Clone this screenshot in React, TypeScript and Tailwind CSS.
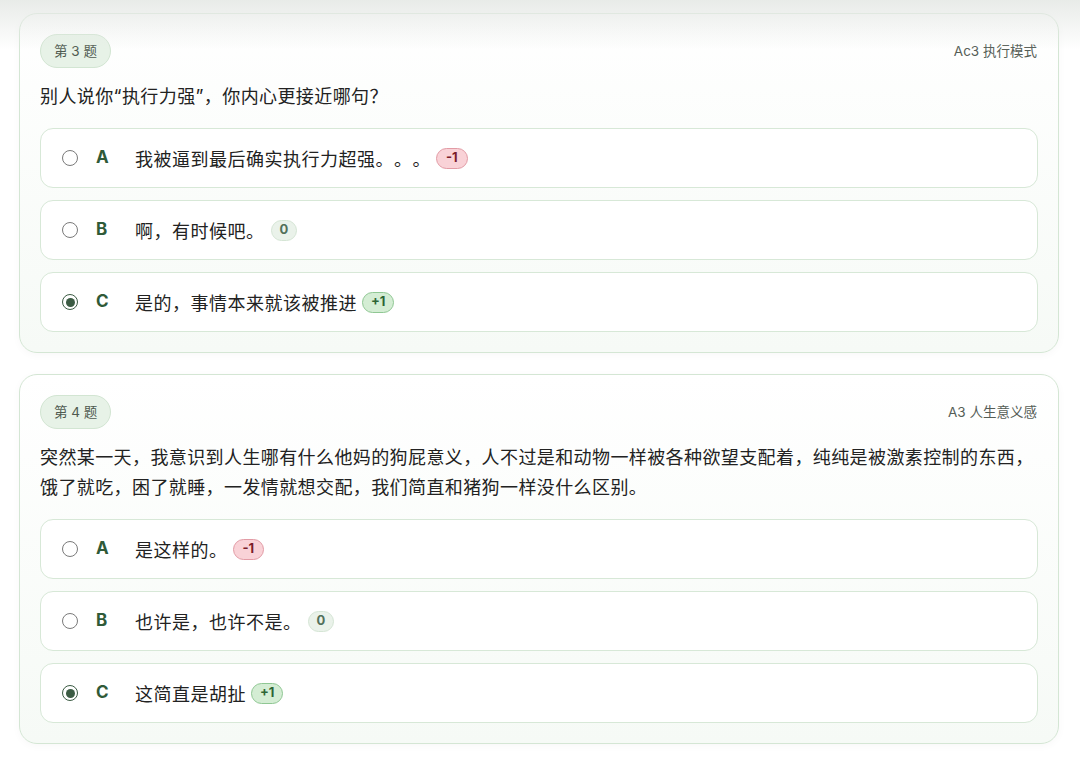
import React from "react";

type Opt = { key: string; text: string; score: number; selected?: boolean };
type Q = { no: number; tag: string; text: string; options: Opt[] };

const questions: Q[] = [
  {
    no: 3,
    tag: "Ac3 执行模式",
    text: "别人说你“执行力强”，你内心更接近哪句？",
    options: [
      { key: "A", text: "我被逼到最后确实执行力超强。。。", score: -1 },
      { key: "B", text: "啊，有时候吧。", score: 0 },
      { key: "C", text: "是的，事情本来就该被推进", score: 1, selected: true },
    ],
  },
  {
    no: 4,
    tag: "A3 人生意义感",
    text: "突然某一天，我意识到人生哪有什么他妈的狗屁意义，人不过是和动物一样被各种欲望支配着，纯纯是被激素控制的东西，饿了就吃，困了就睡，一发情就想交配，我们简直和猪狗一样没什么区别。",
    options: [
      { key: "A", text: "是这样的。", score: -1 },
      { key: "B", text: "也许是，也许不是。", score: 0 },
      { key: "C", text: "这简直是胡扯", score: 1, selected: true },
    ],
  },
];

function Score({ score }: { score: number }) {
  if (score < 0)
    return (
      <span className="ml-[5px] inline-flex h-[21px] items-center rounded-full border border-[#e29ba5] bg-[#f9d2d7] px-[9px] text-[13px] font-bold tracking-normal text-[#7c1d2a]">
        -1
      </span>
    );
  if (score === 0)
    return (
      <span className="ml-[6px] inline-flex h-[21px] items-center rounded-full border border-[#d5e5d5] bg-[#eaf2ea] px-[8px] text-[13px] font-bold tracking-normal text-[#52705a]">
        0
      </span>
    );
  return (
    <span className="ml-[5px] inline-flex h-[21px] items-center rounded-full border border-[#8fc793] bg-[#d4edd4] px-[8px] text-[13px] font-bold tracking-normal text-[#2e6535]">
      +1
    </span>
  );
}

function Radio({ on }: { on?: boolean }) {
  return on ? (
    <span className="flex h-[16px] w-[16px] items-center justify-center rounded-full border-[1.5px] border-[#3b5b43]">
      <span className="h-[9px] w-[9px] rounded-full bg-[#3b5b43]" />
    </span>
  ) : (
    <span className="h-[16px] w-[16px] rounded-full border-[1.5px] border-[#7a7a7a] bg-white" />
  );
}

function Card({ q }: { q: Q }) {
  return (
    <div className="rounded-[18px] border border-[#d4e6d4] bg-gradient-to-b from-white to-[#f6faf6] px-[20px] pt-[20px] pb-[20px] shadow-[0_2px_8px_rgba(0,0,0,0.03)]">
      <div className="flex items-center justify-between">
        <span className="inline-flex h-[34px] items-center rounded-full border border-[#d2e5d2] bg-[#e7f2e7] px-[13px] text-[13.5px] text-[#4f5a50]">
          第 {q.no} 题
        </span>
        <span className="mr-[1px] text-[13.5px] text-[#555d56]">{q.tag}</span>
      </div>
      <p className="mt-[14px] mb-[16px] text-[18px] leading-[30px] tracking-[0.4px] text-[#222]">
        {q.text}
      </p>
      <div className="flex flex-col gap-[12px]">
        {q.options.map((o) => (
          <div
            key={o.key}
            className="flex h-[60px] items-center rounded-[13px] border border-[#d7e8d7] bg-white pl-[21px]"
          >
            <Radio on={o.selected} />
            <span className="ml-[18px] w-[39px] text-[17px] font-bold text-[#2f5a38]">
              {o.key}
            </span>
            <span className="pt-[2px] text-[18px] tracking-[0.5px] text-[#222] [text-spacing-trim:space-all]">
              {o.text}
            </span>
            <Score score={o.score} />
          </div>
        ))}
      </div>
    </div>
  );
}

export default function App() {
  return (
    <div
      className="relative min-h-[760px] bg-white"
      style={{ fontFamily: 'Inter, "Noto Sans CJK SC", "Noto Sans", sans-serif' }}
    >
      <div className="flex flex-col gap-[21px] pl-[19px] pr-[21px] pt-[13px] pb-[14px]">
        {questions.map((q) => (
          <Card key={q.no} q={q} />
        ))}
      </div>
      <div className="pointer-events-none absolute left-0 right-0 top-0 h-[50px] bg-gradient-to-b from-[rgba(230,233,230,0.9)] to-transparent" />
    </div>
  );
}
